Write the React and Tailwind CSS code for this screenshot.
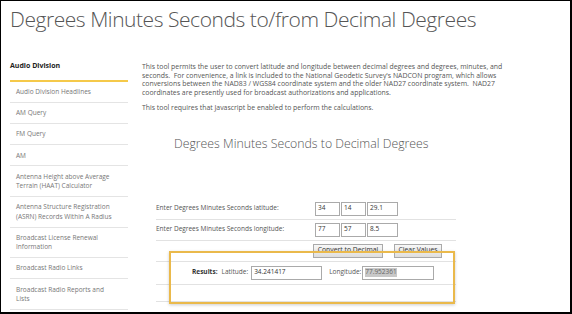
const navItems = [
  ["Audio Division Headlines"],
  ["AM Query"],
  ["FM Query"],
  ["AM"],
  ["Antenna Height above Average", "Terrain (HAAT) Calculator"],
  ["Antenna Structure Registration", "(ASRN) Records Within A Radius"],
  ["Broadcast License Renewal", "Information"],
  ["Broadcast Radio Links"],
  ["Broadcast Radio Reports and", "Lists"],
];

const DmsInput = ({ value, className = "" }) => (
  <div
    className={`flex h-[14px] items-center border border-[#aaa] bg-white px-[2px] text-[6.5px] text-[#333] ${className}`}
  >
    {value}
  </div>
);

const FormRow = ({ children, className = "" }) => (
  <div className={`flex h-[21px] items-center border-b border-[#e2e2e2] ${className}`}>
    {children}
  </div>
);

const App = () => (
  <div className="relative h-[314px] w-[572px] overflow-hidden border-t border-l border-r-2 border-b-2 border-black bg-white font-['Open_Sans',sans-serif] text-[#555]">
    <h1 className="pl-[9px] pt-[3px] text-[21px] font-light leading-[30px] tracking-[-0.45px] text-[#555]">
      Degrees Minutes Seconds to/from Decimal Degrees
    </h1>

    <div className="mt-[24px] flex">
      <aside className="ml-[9px] w-[118px] shrink-0 pt-[3px]">
        <div className="pb-[10px] text-[7px] font-bold leading-[9px] text-[#222]">
          Audio Division
        </div>
        <div className="h-[2px] bg-[#f5c94a]" />
        {navItems.map((lines) => (
          <div
            key={lines[0]}
            className="border-b border-[#e4e4e4] px-[6px] py-[5.3px] text-[6.5px] leading-[9.5px] text-[#777]"
          >
            {lines.map((line) => (
              <div key={line}>{line}</div>
            ))}
          </div>
        ))}
      </aside>

      <main className="ml-[14px] w-[380px] pt-[5px] text-[6.9px] leading-[8.7px] text-[#555]">
        <p>
          This tool permits the user to convert latitude and longitude between decimal degrees and degrees, minutes, and
          <br />
          seconds.&nbsp; For convenience, a link is included to the National Geodetic Survey's NADCON program, which allows
          <br />
          conversions between the NAD83 / WGS84 coordinate system and the older NAD27 coordinate system.&nbsp; NAD27
          <br />
          coordinates are presently used for broadcast authorizations and applications.
        </p>
        <p className="mt-[6px]">
          This tool requires that Javascript be enabled to perform the calculations.
        </p>

        <h2 className="mt-[23px] pl-[32px] text-[12.3px] font-light leading-[16px] text-[#555]">
          Degrees Minutes Seconds to Decimal Degrees
        </h2>

        <div className="relative ml-[14px] mt-[47px] w-[300px] text-[6.5px]">
          <FormRow>
            <span className="w-[159px]">Enter Degrees Minutes Seconds latitude:</span>
            <div className="flex gap-[1px]">
              <DmsInput value="34" className="w-[25px]" />
              <DmsInput value="14" className="w-[25px]" />
              <DmsInput value="29.1" className="w-[31px]" />
            </div>
          </FormRow>
          <FormRow>
            <span className="w-[159px]">Enter Degrees Minutes Seconds longitude:</span>
            <div className="flex gap-[1px]">
              <DmsInput value="77" className="w-[25px]" />
              <DmsInput value="57" className="w-[25px]" />
              <DmsInput value="8.5" className="w-[31px]" />
            </div>
          </FormRow>
          <FormRow className="pl-[157px]">
            <button className="h-[14px] w-[70px] border border-[#aaa] bg-gradient-to-b from-[#f8f8f8] to-[#dedede] text-[6.8px] text-[#333]">
              Convert to Decimal
            </button>
            <button className="ml-[11px] h-[14px] w-[48px] border border-[#aaa] bg-gradient-to-b from-[#f8f8f8] to-[#dedede] text-[6.8px] text-[#333]">
              Clear Values
            </button>
          </FormRow>
          <FormRow className="h-[23px] pl-[36px]">
            <span className="font-bold text-[#333]">Results:</span>
            <span className="ml-[4px]">Latitude:</span>
            <DmsInput value="34.241417" className="ml-[3px] w-[71px]" />
            <span className="ml-[7px]">Longitude:</span>
            <div className="ml-[1px] flex h-[14px] w-[72px] items-center border border-[#aaa] bg-white px-[2px]">
              <span className="bg-[#c8c8c8] text-[#666]">77.952361</span>
            </div>
          </FormRow>
          <div className="h-[17px] border-b border-[#e2e2e2]" />
          <div className="pointer-events-none absolute left-[13px] top-[52px] h-[53px] w-[286px] border-2 border-[#eab94b] shadow-[0_1px_3px_rgba(0,0,0,0.2)]" />
        </div>
      </main>
    </div>
  </div>
);

export default App;
